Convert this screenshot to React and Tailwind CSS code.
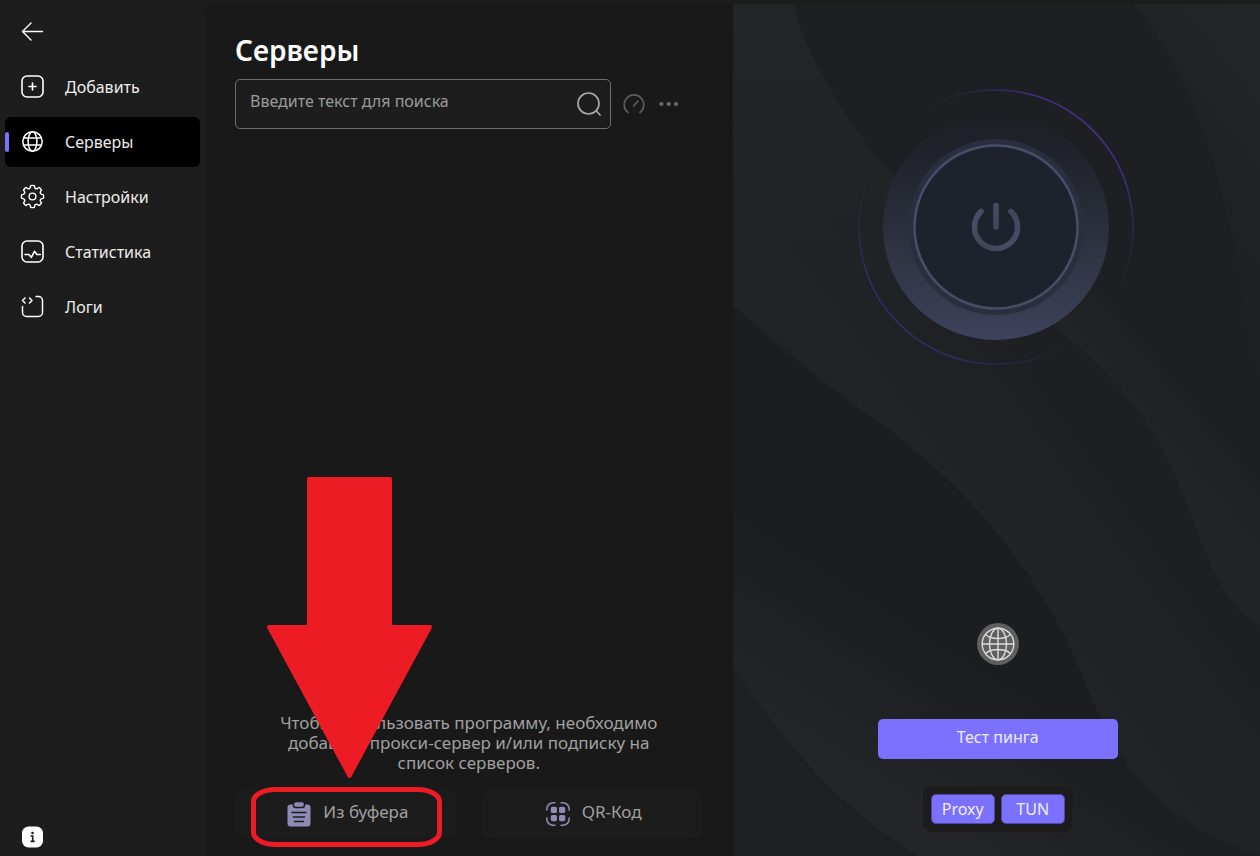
import { useState } from "react";

const stroke = { fill: "none", stroke: "currentColor", strokeLinecap: "round", strokeLinejoin: "round" };

// Outline of an eight-lobed gear around (11.5, 11.5)
const polar = (deg, r) => {
  const a = (deg * Math.PI) / 180;
  return `${(11.5 + r * Math.cos(a)).toFixed(2)} ${(11.5 + r * Math.sin(a)).toFixed(2)}`;
};
const gearPath = `M${polar(-10, 11)}${Array.from({ length: 8 }, (_, i) => i * 45)
  .map(
    (a) =>
      `Q${polar(a, 11.4)} ${polar(a + 10, 11)}L${polar(a + 13, 9.4)}Q${polar(a + 22.5, 7.8)} ${polar(a + 32, 9.4)}L${polar(a + 35, 11)}`
  )
  .join("")}Z`;

const BackIcon = () => (
  <svg className="w-6 h-6" viewBox="0 0 24 24" strokeWidth="1.4" {...stroke}>
    <path d="M22.500 11.500H2.500M11 3 2.500 11.500 11 20" />
  </svg>
);

const AddIcon = () => (
  <svg className="w-6 h-6" viewBox="0 0 24 24" strokeWidth="1.6" {...stroke}>
    <rect x="1" y="1" width="21" height="21" rx="5" />
    <path d="M11.500 8v7M8 11.500h7" />
  </svg>
);

const GlobeIcon = () => (
  <svg className="w-6 h-6" viewBox="0 0 24 24" strokeWidth="1.5" {...stroke}>
    <circle cx="11.500" cy="11.500" r="9.700" />
    <ellipse cx="11.500" cy="11.500" rx="4.400" ry="9.700" />
    <path d="M2.700 8h17.600M2.700 15h17.600" />
  </svg>
);

const SettingsIcon = () => (
  <svg className="w-6 h-6 overflow-visible" viewBox="0 0 24 24" strokeWidth="1.4" {...stroke}>
    <path d={gearPath} />
    <circle cx="11.500" cy="11.500" r="3.400" />
  </svg>
);

const StatsIcon = () => (
  <svg className="w-6 h-6" viewBox="0 0 24 24" strokeWidth="1.6" {...stroke}>
    <rect x="1" y="1" width="21" height="21" rx="5" />
    <path d="M4 14.500h3.800l2.500 2.800 3.200-6 2.400 3.200h3.400" />
  </svg>
);

const LogsIcon = () => (
  <svg className="w-6 h-6" viewBox="0 0 24 24" strokeWidth="1.5" {...stroke}>
    <path d="M15 1.500h2.500a4 4 0 0 1 4 4v12a4 4 0 0 1-4 4h-12a4 4 0 0 1-4-4V11.500" />
    <path d="M4 3 1.500 5.500 4 8M8.500 3 11 5.500 8.500 8" />
  </svg>
);

const ClipboardIcon = () => (
  <svg className="w-6 h-[26px]" viewBox="0 0 24 26">
    <rect x="0.5" y="3.5" width="23" height="22" rx="3" fill="#8e89b5" />
    <rect x="6.5" y="0.5" width="11" height="6" rx="2.5" fill="#8e89b5" stroke="#1c1c1c" strokeWidth="1.4" />
    <path d="M5 11.5h14M6.5 16h11M7.5 20.5h9" stroke="#1c1c1c" strokeWidth="1.4" strokeLinecap="round" />
  </svg>
);

const QrIcon = () => (
  <svg className="w-6 h-6" viewBox="0 0 24 24">
    <path
      d="M.8 8.500V7A6.200 6.200 0 0 1 7 .8h2.500M14.500.8H17A6.200 6.200 0 0 1 23.200 7v1.500M23.200 15.500V17a6.200 6.200 0 0 1-6.200 6.200h-2.500M9.500 23.200H7A6.200 6.200 0 0 1 .8 17v-1.500"
      fill="none"
      stroke="#8e89b5"
      strokeWidth="1.6"
    />
    <g fill="#8e89b5">
      <rect x="4.8" y="4.8" width="6.2" height="6.2" rx="1.6" />
      <rect x="13" y="4.8" width="6.2" height="6.2" rx="1.6" />
      <rect x="4.8" y="13" width="6.2" height="6.2" rx="1.6" />
      <rect x="13" y="13" width="6.2" height="6.2" rx="1.6" />
    </g>
  </svg>
);

const navItems = [
  { id: "add", label: "Добавить", icon: AddIcon },
  { id: "servers", label: "Серверы", icon: GlobeIcon },
  { id: "settings", label: "Настройки", icon: SettingsIcon },
  { id: "stats", label: "Статистика", icon: StatsIcon },
  { id: "logs", label: "Логи", icon: LogsIcon },
];

const NavItem = ({ label, icon: Icon, active, onClick }) => (
  <button
    type="button"
    onClick={onClick}
    className={`relative flex h-[50px] w-full items-center gap-5 rounded-md pl-4 text-left text-base text-[#ececec] ${
      active ? "bg-black" : ""
    }`}
  >
    {active && <span className="absolute left-0 top-[15px] h-5 w-1 rounded-full bg-[#7c70ff]" />}
    <span className="flex w-6 justify-center text-white">
      <Icon />
    </span>
    <span>{label}</span>
  </button>
);

const Sidebar = ({ page, onChange }) => (
  <nav className="flex w-[205px] shrink-0 flex-col px-[5px] text-white">
    <button type="button" aria-label="Назад" className="ml-[15px] mt-5 w-6">
      <BackIcon />
    </button>
    <div className="mt-[18px] flex flex-col gap-[5px]">
      {navItems.map((item) => (
        <NavItem key={item.id} {...item} active={page === item.id} onClick={() => onChange(item.id)} />
      ))}
    </div>
    <button type="button" aria-label="О программе" className="mb-2 ml-4 mt-auto w-[22px]">
      <svg className="w-[22px] h-[22px]" viewBox="0 0 22 22">
        <rect x="1" y="0.5" width="21" height="21" rx="6.5" fill="#fff" />
        <circle cx="11.500" cy="7" r="1.300" fill="#1d1d1d" />
        <path d="M9.500 10h2.200v5.200M9.500 15.400h4.200" fill="none" stroke="#1d1d1d" strokeWidth="1.600" />
      </svg>
    </button>
  </nav>
);

// Arrow and frame that point to the "from clipboard" button
const Pointer = () => (
  <svg
    className="pointer-events-none absolute -bottom-[9px] left-4 h-[370px] w-[191px]"
    viewBox="0 0 191 370"
    aria-hidden="true"
  >
    <path
      d="M58 2h81v148h40L98.500 299 18 150h40z"
      fill="#ed1c24"
      stroke="#ed1c24"
      strokeWidth="4"
      strokeLinejoin="round"
    />
    <rect x="2.500" y="312.500" width="186" height="55" rx="22" ry="12" fill="none" stroke="#ed1c24" strokeWidth="5" />
  </svg>
);

const ImportButton = ({ icon: Icon, children }) => (
  <button type="button" className="flex h-12 items-center justify-center gap-3 rounded-lg bg-[#1c1c1c] pl-1">
    <Icon />
    <span className="pb-1">{children}</span>
  </button>
);

const ServersPanel = () => {
  const [query, setQuery] = useState("");

  return (
    <main className="flex flex-col rounded-tl-xl bg-[#191919] px-[30px] pb-[18px] pt-[26px]">
      <h1 className="text-[28px] font-semibold leading-10 text-white">Серверы</h1>

      <div className="mt-[9px] flex items-center">
        <div className="flex h-[50px] w-[376px] items-center rounded-[5px] border border-[#6d6d6d] bg-[#1d1d1d] pl-3.5 pr-2">
          <input
            type="text"
            aria-label="Поиск"
            placeholder="Введите текст для поиска"
            value={query}
            onChange={(e) => setQuery(e.target.value)}
            className="min-w-0 flex-1 bg-transparent pb-1.5 text-base text-[#d0d0d0] outline-none placeholder:text-[#9a9a9a]"
          />
          <button type="button" aria-label="Найти" className="text-[#a8a8a8]">
            <svg className="w-[26px] h-[26px]" viewBox="0 0 26 26" strokeWidth="1.7" {...stroke}>
              <circle cx="12.500" cy="12.500" r="10.500" />
              <path d="m20.500 20 3.500 4" />
            </svg>
          </button>
        </div>
        <button type="button" aria-label="Проверить скорость" className="ml-3 text-[#5c5c5c]">
          <svg className="w-[22px] h-[22px]" viewBox="0 0 22 22" strokeWidth="1.7" {...stroke}>
            <path d="M5 19.500a9.800 9.800 0 1 1 12 0M10.500 13 15 8.200" />
          </svg>
        </button>
        <button type="button" aria-label="Ещё" className="ml-3.5 text-[#6a6a6a]">
          <svg className="w-5 h-5" viewBox="0 0 20 20" fill="currentColor">
            <circle cx="2.500" cy="10" r="2.100" />
            <circle cx="9.700" cy="10" r="2.100" />
            <circle cx="17" cy="10" r="2.100" />
          </svg>
        </button>
      </div>

      <div className="relative mt-auto text-[17px] leading-5 text-[#a0a0a0]">
        <p className="mx-auto max-w-[384px] text-center">
          Чтобы использовать программу, необходимо добавить прокси-сервер и/или подписку на список серверов.
        </p>
        <div className="mt-[17px] grid grid-cols-2 gap-6">
          <ImportButton icon={ClipboardIcon}>Из буфера</ImportButton>
          <ImportButton icon={QrIcon}>QR-Код</ImportButton>
        </div>
        <Pointer />
      </div>
    </main>
  );
};

const Waves = () => (
  <svg
    className="absolute inset-0 h-full w-full"
    viewBox="0 0 527 852"
    preserveAspectRatio="none"
    aria-hidden="true"
  >
    <defs>
      <linearGradient id="bandTop" gradientUnits="userSpaceOnUse" x1="0" y1="0" x2="0" y2="360">
        <stop offset="0" stopColor="#242529" />
        <stop offset="0.5" stopColor="#222327" />
        <stop offset="1" stopColor="#222327" stopOpacity="0" />
      </linearGradient>
      <linearGradient id="bandMid" gradientUnits="userSpaceOnUse" x1="190" y1="453" x2="320" y2="360">
        <stop offset="0" stopColor="#222327" />
        <stop offset="0.3" stopColor="#212226" />
        <stop offset="1" stopColor="#1e1f23" />
      </linearGradient>
      <linearGradient id="ridge" gradientUnits="userSpaceOnUse" x1="400" y1="420" x2="454" y2="375">
        <stop offset="0" stopColor="#232428" />
        <stop offset="1" stopColor="#232428" stopOpacity="0" />
      </linearGradient>
      <linearGradient id="corner" gradientUnits="userSpaceOnUse" x1="400" y1="120" x2="527" y2="20">
        <stop offset="0" stopColor="#1f2024" />
        <stop offset="1" stopColor="#25262a" />
      </linearGradient>
      <linearGradient id="low" gradientUnits="userSpaceOnUse" x1="70" y1="742" x2="160" y2="600">
        <stop offset="0" stopColor="#242529" />
        <stop offset="1" stopColor="#1c1d21" />
      </linearGradient>
    </defs>
    <rect width="527" height="852" fill="#1e1f23" />
    <path d="M0 0H60C75 60 130 150 190 200S290 300 320 321C400 385 430 440 450 490S485 600 527 621V852C370 800 360 680 325 620C267 520 190 450 133 409S50 340 0 302Z" fill="url(#bandMid)" />
    <path d="M0 0H60C75 60 130 150 190 200V450C150 410 50 340 0 302Z" fill="url(#bandTop)" />
    <path d="M300 300L320 321C400 385 430 440 450 490S485 600 527 621V300L360 250Z" fill="url(#ridge)" />
    <path d="M400 0C450 60 480 140 497 226S510 335 527 371V0Z" fill="url(#corner)" />
    <path d="M0 302C50 350 90 380 133 409S267 510 325 620S370 800 527 852H180C100 825 45 740 0 662Z" fill="url(#low)" />
    <path d="M0 662C45 730 100 800 185 852H0Z" fill="#1f2024" />
  </svg>
);

const PowerButton = ({ on, onToggle }) => (
  <button type="button" aria-label="Подключить" aria-pressed={on} onClick={onToggle} className="rounded-full">
    <svg className="h-[276px] w-[276px]" viewBox="-138 -138 276 276" fill="none">
      <defs>
        <linearGradient id="halo" x1="0" y1="0" x2="0" y2="1">
          <stop offset="0" stopColor="#1d1f24" />
          <stop offset="0.15" stopColor="#1f222a" />
          <stop offset="0.5" stopColor="#2b2f3c" />
          <stop offset="1" stopColor="#3e425c" />
        </linearGradient>
        <linearGradient id="arcRight" gradientUnits="userSpaceOnUse" x1="-67" y1="-121" x2="120" y2="67">
          <stop offset="0" stopColor="#4a2f8f" stopOpacity="0" />
          <stop offset="0.25" stopColor="#432c80" />
          <stop offset="0.5" stopColor="#4d3196" />
          <stop offset="0.75" stopColor="#432b7d" />
          <stop offset="1" stopColor="#3a2a72" stopOpacity="0" />
        </linearGradient>
        <linearGradient id="arcLeft" gradientUnits="userSpaceOnUse" x1="-125" y1="-56" x2="73" y2="120">
          <stop offset="0" stopColor="#352c6a" stopOpacity="0" />
          <stop offset="0.25" stopColor="#352c6a" />
          <stop offset="0.7" stopColor="#352c6a" />
          <stop offset="1" stopColor="#352c6a" stopOpacity="0" />
        </linearGradient>
        <linearGradient id="power" gradientUnits="userSpaceOnUse" x1="-20" y1="-20" x2="20" y2="20">
          <stop offset="0" stopColor="#4b516c" />
          <stop offset="0.55" stopColor="#434557" />
          <stop offset="1" stopColor="#4a4e66" />
        </linearGradient>
      </defs>
      <path d="M-67 -119.500A137 137 0 0 1 120 66" stroke="url(#arcRight)" strokeWidth="1.500" />
      <path d="M-125 -56A137 137 0 0 0 73 116" stroke="url(#arcLeft)" strokeWidth="1.500" />
      <circle r="113" fill="url(#halo)" />
      <circle r="88" fill="#2a2f3d" />
      <circle r="81.500" fill="#1e222d" stroke="#484e69" strokeWidth="2.500" />
      <path d="M-15 -15.500A21.500 21.500 0 1 0 15 -15.500M0 -21.500V0" stroke="url(#power)" strokeWidth="5.500" strokeLinecap="round" />
    </svg>
  </button>
);

const ModeButton = ({ label, on, onClick }) => (
  <button
    type="button"
    aria-pressed={on}
    onClick={onClick}
    className={`h-[30px] w-16 rounded-[5px] border border-[#4f499b] text-base leading-5 text-[#f0efff] ${
      on ? "bg-[#7c70ff]" : "bg-[#2b2b2b]"
    }`}
  >
    {label}
  </button>
);

const ConnectPanel = () => {
  const [connected, setConnected] = useState(false);
  const [modes, setModes] = useState({ proxy: true, tun: true });

  const toggle = (mode) => setModes((prev) => ({ ...prev, [mode]: !prev[mode] }));

  return (
    <aside className="relative overflow-hidden bg-[#1e1f24]">
      <Waves />
      <div className="relative flex h-full flex-col items-center pb-[23px] pt-[85px]">
        <PowerButton on={connected} onToggle={() => setConnected(!connected)} />

        <div className="mt-auto flex flex-col items-center pl-[3px]">
          <div className="flex h-[42px] w-[42px] items-center justify-center rounded-full bg-[#5f5f5f]">
            <svg className="w-[34px] h-[34px] text-[#dcdcdc]" viewBox="0 0 34 34" strokeWidth="1.400" {...stroke}>
              <circle cx="17" cy="17" r="15.800" />
              <ellipse cx="17" cy="17" rx="8.500" ry="15.800" />
              <path d="M17 1.200v31.600M1.200 17h31.600M4.500 7.500C8 10.800 12 11.500 17 11.500s9-.7 12.500-4M4.500 26.500C8 23.200 12 22.500 17 22.500s9 .7 12.500 4" />
            </svg>
          </div>
          <button
            type="button"
            className="mt-[54px] h-10 w-60 rounded-[5px] bg-[#7c70ff] pb-1 text-base text-[#eeedff]"
          >
            Тест пинга
          </button>
          <div className="mt-[26px] flex gap-1.5 rounded-[10px] border border-[#242424] bg-[#1c1c1c] p-2">
            <ModeButton label="Proxy" on={modes.proxy} onClick={() => toggle("proxy")} />
            <ModeButton label="TUN" on={modes.tun} onClick={() => toggle("tun")} />
          </div>
        </div>
      </div>
    </aside>
  );
};

export default function App() {
  const [page, setPage] = useState("servers");

  return (
    <div className="flex min-h-screen bg-[#1d1d1d] font-['Noto_Sans','Open_Sans',sans-serif]">
      <Sidebar page={page} onChange={setPage} />
      <div className="mt-1 grid flex-1 grid-cols-2">
        <ServersPanel />
        <ConnectPanel />
      </div>
    </div>
  );
}
